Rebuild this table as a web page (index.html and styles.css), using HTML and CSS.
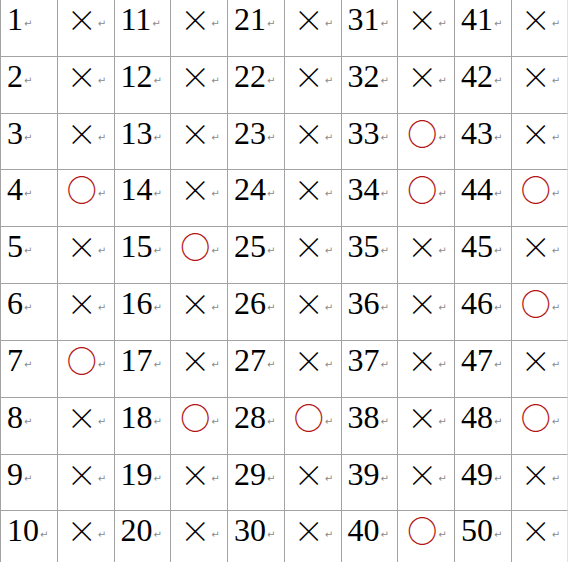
FILE: index.html
```html
<!DOCTYPE html>
<html lang="ja">
<head>
<meta charset="utf-8">
<title>Table</title>
<link rel="stylesheet" href="styles.css">
</head>
<body>
<div class="sheet">
  <div class="c n">1<span class="p">↵</span></div><div class="c m"><span class="x">×</span><span class="p">↵</span></div><div class="c n">11<span class="p">↵</span></div><div class="c m"><span class="x">×</span><span class="p">↵</span></div><div class="c n">21<span class="p">↵</span></div><div class="c m"><span class="x">×</span><span class="p">↵</span></div><div class="c n">31<span class="p">↵</span></div><div class="c m"><span class="x">×</span><span class="p">↵</span></div><div class="c n">41<span class="p">↵</span></div><div class="c m last"><span class="x">×</span><span class="p">↵</span></div>
  <div class="c n">2<span class="p">↵</span></div><div class="c m"><span class="x">×</span><span class="p">↵</span></div><div class="c n">12<span class="p">↵</span></div><div class="c m"><span class="x">×</span><span class="p">↵</span></div><div class="c n">22<span class="p">↵</span></div><div class="c m"><span class="x">×</span><span class="p">↵</span></div><div class="c n">32<span class="p">↵</span></div><div class="c m"><span class="x">×</span><span class="p">↵</span></div><div class="c n">42<span class="p">↵</span></div><div class="c m last"><span class="x">×</span><span class="p">↵</span></div>
  <div class="c n">3<span class="p">↵</span></div><div class="c m"><span class="x">×</span><span class="p">↵</span></div><div class="c n">13<span class="p">↵</span></div><div class="c m"><span class="x">×</span><span class="p">↵</span></div><div class="c n">23<span class="p">↵</span></div><div class="c m"><span class="x">×</span><span class="p">↵</span></div><div class="c n">33<span class="p">↵</span></div><div class="c m"><span class="o">○</span><span class="p">↵</span></div><div class="c n">43<span class="p">↵</span></div><div class="c m last"><span class="x">×</span><span class="p">↵</span></div>
  <div class="c n">4<span class="p">↵</span></div><div class="c m"><span class="o">○</span><span class="p">↵</span></div><div class="c n">14<span class="p">↵</span></div><div class="c m"><span class="x">×</span><span class="p">↵</span></div><div class="c n">24<span class="p">↵</span></div><div class="c m"><span class="x">×</span><span class="p">↵</span></div><div class="c n">34<span class="p">↵</span></div><div class="c m"><span class="o">○</span><span class="p">↵</span></div><div class="c n">44<span class="p">↵</span></div><div class="c m last"><span class="o">○</span><span class="p">↵</span></div>
  <div class="c n">5<span class="p">↵</span></div><div class="c m"><span class="x">×</span><span class="p">↵</span></div><div class="c n">15<span class="p">↵</span></div><div class="c m"><span class="o">○</span><span class="p">↵</span></div><div class="c n">25<span class="p">↵</span></div><div class="c m"><span class="x">×</span><span class="p">↵</span></div><div class="c n">35<span class="p">↵</span></div><div class="c m"><span class="x">×</span><span class="p">↵</span></div><div class="c n">45<span class="p">↵</span></div><div class="c m last"><span class="x">×</span><span class="p">↵</span></div>
  <div class="c n">6<span class="p">↵</span></div><div class="c m"><span class="x">×</span><span class="p">↵</span></div><div class="c n">16<span class="p">↵</span></div><div class="c m"><span class="x">×</span><span class="p">↵</span></div><div class="c n">26<span class="p">↵</span></div><div class="c m"><span class="x">×</span><span class="p">↵</span></div><div class="c n">36<span class="p">↵</span></div><div class="c m"><span class="x">×</span><span class="p">↵</span></div><div class="c n">46<span class="p">↵</span></div><div class="c m last"><span class="o">○</span><span class="p">↵</span></div>
  <div class="c n">7<span class="p">↵</span></div><div class="c m"><span class="o">○</span><span class="p">↵</span></div><div class="c n">17<span class="p">↵</span></div><div class="c m"><span class="x">×</span><span class="p">↵</span></div><div class="c n">27<span class="p">↵</span></div><div class="c m"><span class="x">×</span><span class="p">↵</span></div><div class="c n">37<span class="p">↵</span></div><div class="c m"><span class="x">×</span><span class="p">↵</span></div><div class="c n">47<span class="p">↵</span></div><div class="c m last"><span class="x">×</span><span class="p">↵</span></div>
  <div class="c n">8<span class="p">↵</span></div><div class="c m"><span class="x">×</span><span class="p">↵</span></div><div class="c n">18<span class="p">↵</span></div><div class="c m"><span class="o">○</span><span class="p">↵</span></div><div class="c n">28<span class="p">↵</span></div><div class="c m"><span class="o">○</span><span class="p">↵</span></div><div class="c n">38<span class="p">↵</span></div><div class="c m"><span class="x">×</span><span class="p">↵</span></div><div class="c n">48<span class="p">↵</span></div><div class="c m last"><span class="o">○</span><span class="p">↵</span></div>
  <div class="c n">9<span class="p">↵</span></div><div class="c m"><span class="x">×</span><span class="p">↵</span></div><div class="c n">19<span class="p">↵</span></div><div class="c m"><span class="x">×</span><span class="p">↵</span></div><div class="c n">29<span class="p">↵</span></div><div class="c m"><span class="x">×</span><span class="p">↵</span></div><div class="c n">39<span class="p">↵</span></div><div class="c m"><span class="x">×</span><span class="p">↵</span></div><div class="c n">49<span class="p">↵</span></div><div class="c m last"><span class="x">×</span><span class="p">↵</span></div>
  <div class="c n">10<span class="p">↵</span></div><div class="c m"><span class="x">×</span><span class="p">↵</span></div><div class="c n">20<span class="p">↵</span></div><div class="c m"><span class="x">×</span><span class="p">↵</span></div><div class="c n">30<span class="p">↵</span></div><div class="c m"><span class="x">×</span><span class="p">↵</span></div><div class="c n">40<span class="p">↵</span></div><div class="c m"><span class="o">○</span><span class="p">↵</span></div><div class="c n">50<span class="p">↵</span></div><div class="c m last"><span class="x">×</span><span class="p">↵</span></div>
</div>
</body>
</html>
```

FILE: styles.css
```css
html, body {
  margin: 0;
  padding: 0;
  background: #ffffff;
  overflow: hidden;
}

body {
  width: 568px;
  height: 562px;
}

.sheet {
  display: grid;
  grid-template-columns: repeat(10, 56.75px);
  grid-auto-rows: 56.84px;
  margin-top: -1px;
}

.c {
  box-sizing: border-box;
  border-left: 1px solid #a3a3a3;
  border-top: 1px solid #a3a3a3;
  font-family: "Liberation Serif", "Times New Roman", serif;
  font-size: 32px;
  line-height: 36px;
  color: #000000;
  white-space: nowrap;
}

.n {
  padding: 1px 0 0 6px;
}

.m {
  padding: 1px 0 0 9px;
}

.last {
  border-right: 1px solid #dfe4ea;
}

.x,
.o {
  font-family: "Noto Sans CJK JP", "Noto Sans CJK SC", sans-serif;
  font-size: 30px;
  line-height: 28px;
  font-feature-settings: "fwid" 1;
  display: inline-block;
  width: 30px;
  text-align: center;
  vertical-align: -1px;
}

.x {
  color: #000000;
  font-weight: 300;
}

.o {
  color: #b31717;
  font-weight: 500;
}

.p {
  font-family: "DejaVu Sans", sans-serif;
  font-size: 10px;
  line-height: 10px;
  color: #8a8a8a;
  margin-left: 1px;
  vertical-align: 3px;
}
```
